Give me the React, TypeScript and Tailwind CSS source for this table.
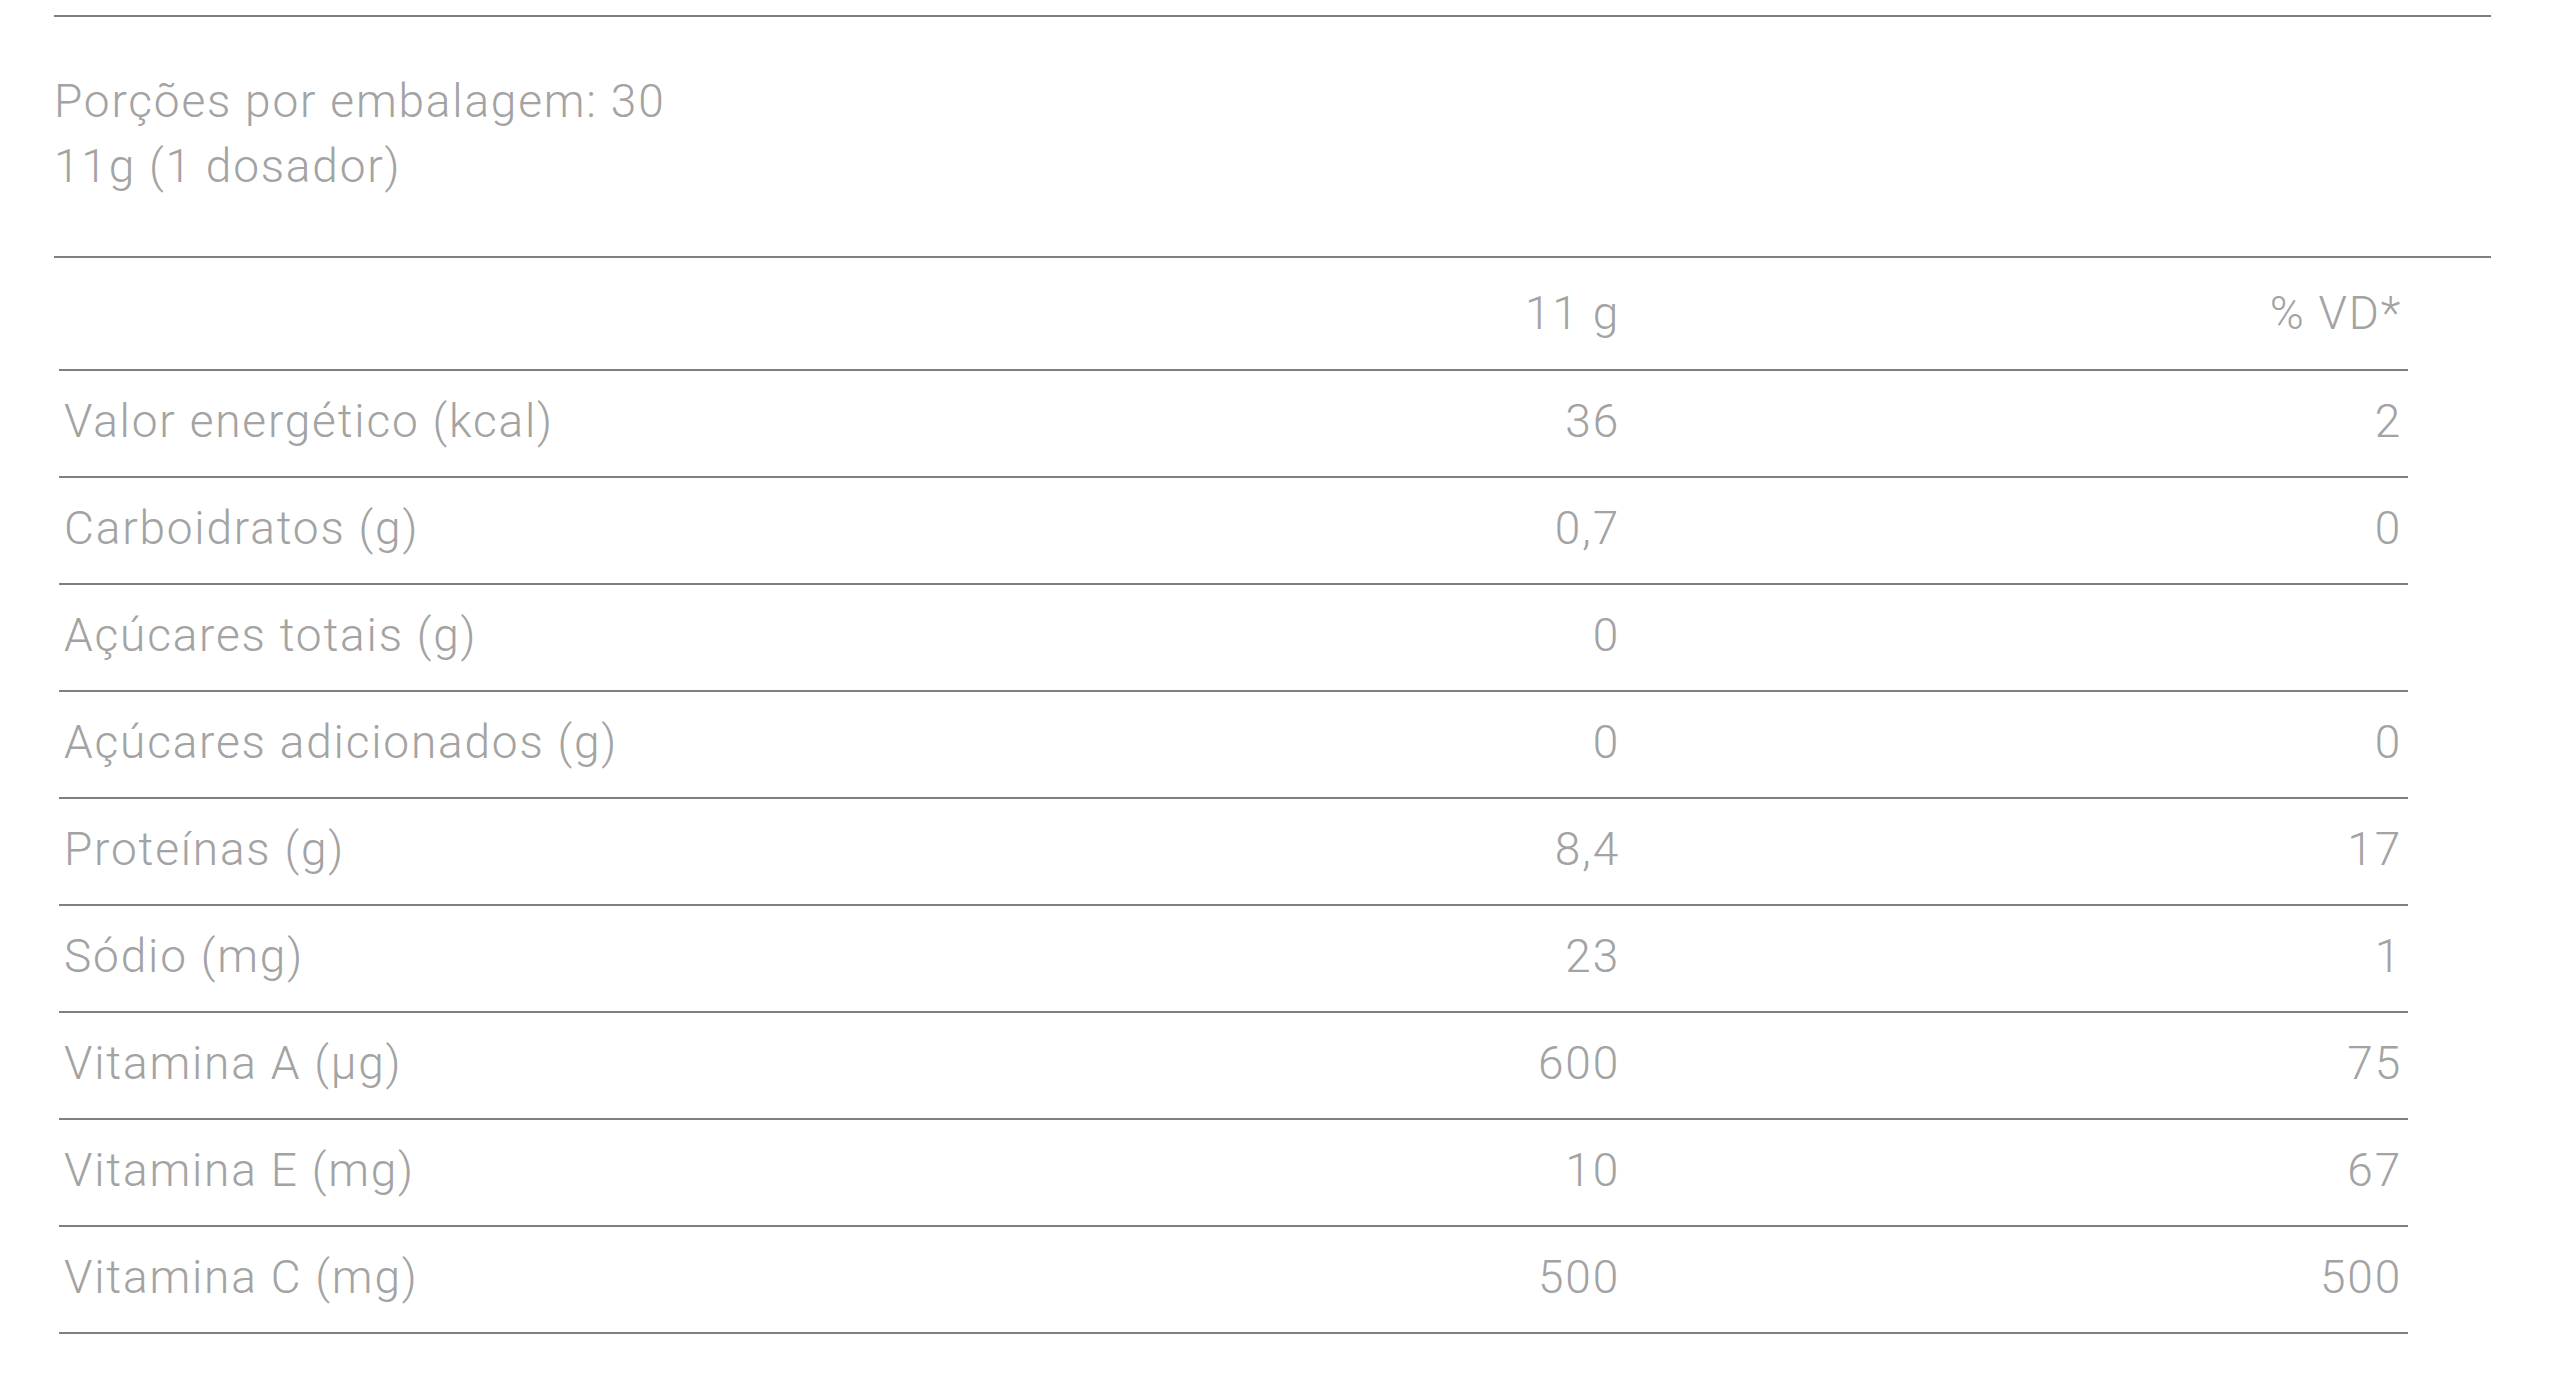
import React from 'react';

type Row = { name: string; qty: string; vd: string };

const rows: Row[] = [
    { name: 'Valor energético (kcal)', qty: '36', vd: '2' },
    { name: 'Carboidratos (g)', qty: '0,7', vd: '0' },
    { name: 'Açúcares totais (g)', qty: '0', vd: '' },
    { name: 'Açúcares adicionados (g)', qty: '0', vd: '0' },
    { name: 'Proteínas (g)', qty: '8,4', vd: '17' },
    { name: 'Sódio (mg)', qty: '23', vd: '1' },
    { name: 'Vitamina A (µg)', qty: '600', vd: '75' },
    { name: 'Vitamina E (mg)', qty: '10', vd: '67' },
    { name: 'Vitamina C (mg)', qty: '500', vd: '500' },
];

export default function App() {
    return (
        <div className="min-h-[1396px] bg-white pt-[15px] font-['Roboto','Liberation_Sans',sans-serif] text-[46px] font-light tracking-[1.8px] text-[#a3a3a3]">
            <div className="ml-[54px] w-[2437px] border-t-2 border-[#7f7f7f]">
                <div className="border-b-2 border-[#7f7f7f] pt-[52px] pb-[57px] leading-[65px]">
                    <p>Porções por embalagem: 30</p>
                    <p>11g (1 dosador)</p>
                </div>
                <div className="ml-[5px] w-[2349px]">
                    <div className="grid h-[113px] grid-cols-[1556px_782px] items-center border-b-2 border-[#7f7f7f] pl-[5px]">
                        <span className="text-right">11 g</span>
                        <span className="text-right">% VD*</span>
                    </div>
                    {rows.map((row, index) => (
                        <div
                            key={index}
                            className="grid h-[107px] grid-cols-[1556px_782px] items-center border-b-2 border-[#7f7f7f] pb-[5px] pl-[5px]"
                        >
                            <div className="flex justify-between">
                                <span>{row.name}</span>
                                <span>{row.qty}</span>
                            </div>
                            <span className="text-right">{row.vd}</span>
                        </div>
                    ))}
                </div>
            </div>
        </div>
    );
}
